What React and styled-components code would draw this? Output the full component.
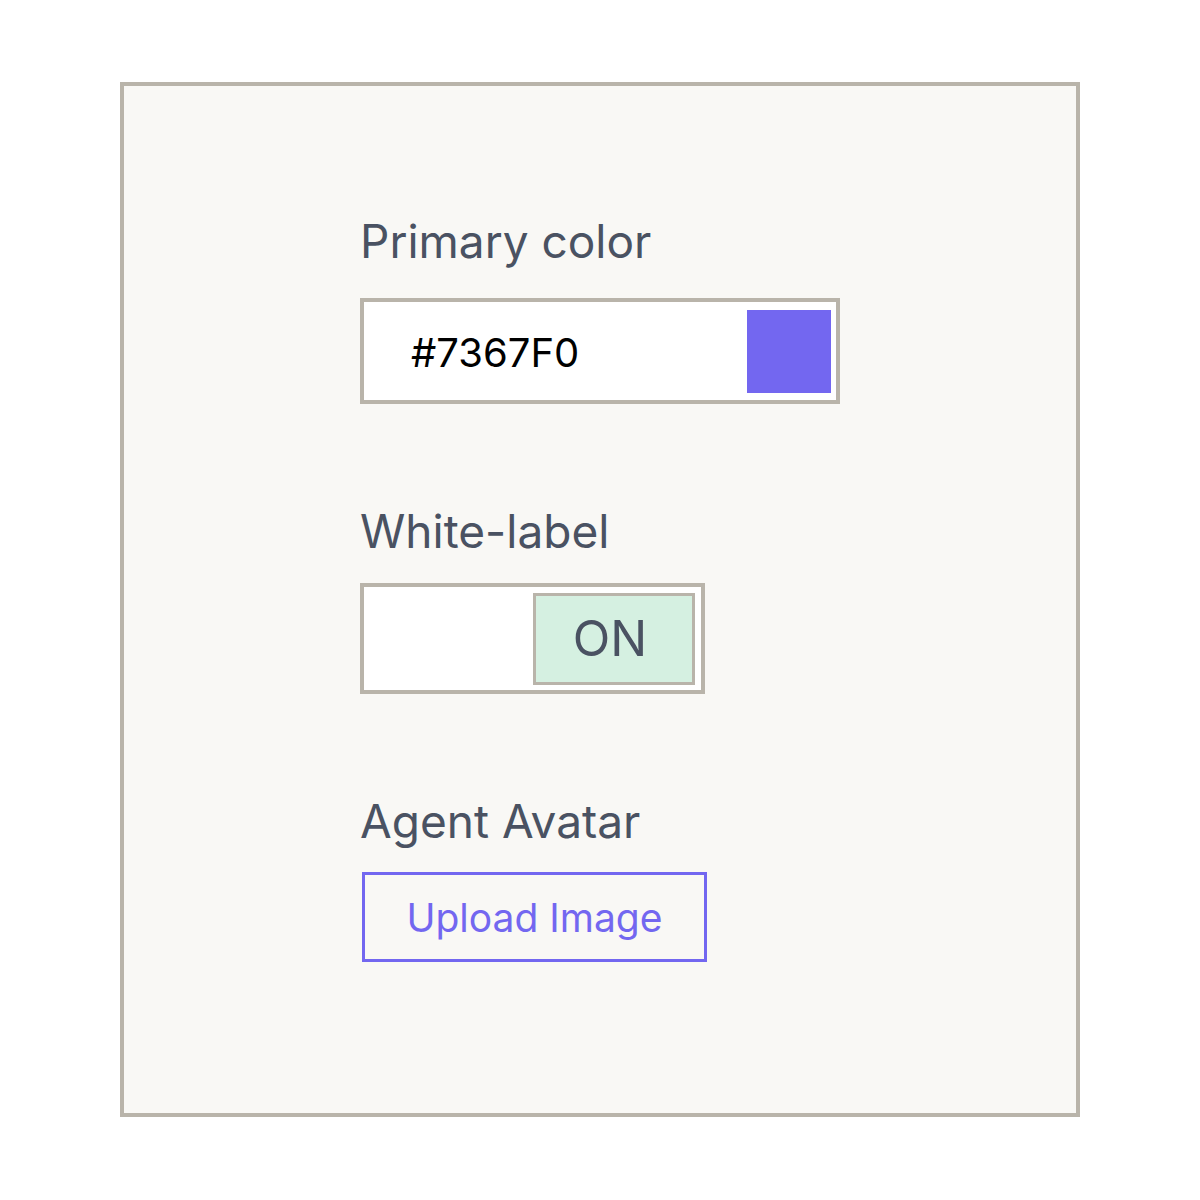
import React from "react";
import styled, { createGlobalStyle } from "styled-components";

const Global = createGlobalStyle`
  html, body { margin: 0; padding: 0; background: #ffffff; }
  body { font-family: Inter, "Noto Sans", sans-serif; }
`;

const Page = styled.div`
  width: 1200px;
  height: 1200px;
  padding: 82px 0 0 120px;
  box-sizing: border-box;
`;

const Card = styled.div`
  width: 960px;
  height: 1035px;
  box-sizing: border-box;
  border: 4px solid #b9b4aa;
  background: #f9f8f5;
  padding: 133px 0 0 236px;
  display: flex;
  flex-direction: column;
  gap: 105px;
`;

const Field = styled.div`
  display: flex;
  flex-direction: column;
  align-items: flex-start;
  gap: ${(p) => p.$gap}px;
`;

const Label = styled.div`
  font-family: Inter, sans-serif;
  font-size: 46px;
  line-height: 44px;
  color: #4a5262;
`;

const ColorInput = styled.div`
  width: 480px;
  height: 106px;
  box-sizing: border-box;
  border: 4px solid #b9b4aa;
  background: #ffffff;
  display: flex;
  align-items: center;
  justify-content: space-between;
  padding: 0 5px 0 47px;
`;

const HexText = styled.span`
  font-family: Inter, sans-serif;
  font-size: 40px;
  color: #000000;
  padding-top: 2px;
`;

const Swatch = styled.div`
  width: 84px;
  height: 83px;
  background: ${(p) => p.$color};
`;

const Toggle = styled.div`
  width: 345px;
  height: 111px;
  box-sizing: border-box;
  border: 4px solid #b9b4aa;
  background: #ffffff;
  display: flex;
  align-items: center;
  justify-content: flex-end;
  padding: 0 6px;
`;

const Knob = styled.div`
  width: 162px;
  height: 92px;
  box-sizing: border-box;
  border: 3px solid #b9b4aa;
  background: #d5f0e1;
  display: flex;
  align-items: center;
  justify-content: center;
  padding-right: 8px;
  font-family: Inter, sans-serif;
  font-size: 49px;
  color: #4a5262;
`;

const UploadButton = styled.button`
  width: 345px;
  height: 90px;
  box-sizing: border-box;
  margin-left: 2px;
  border: 3px solid #7367f0;
  background: transparent;
  color: #7367f0;
  font-family: Inter, sans-serif;
  font-size: 39px;
  padding: 0;
  display: flex;
  align-items: center;
  justify-content: center;
  cursor: pointer;
`;

export default function App() {
  return (
    <>
      <Global />
      <Page>
        <Card>
          <Field $gap={35}>
            <Label>Primary color</Label>
            <ColorInput>
              <HexText>#7367F0</HexText>
              <Swatch $color="#7367f0" />
            </ColorInput>
          </Field>
          <Field $gap={30}>
            <Label>White-label</Label>
            <Toggle>
              <Knob>ON</Knob>
            </Toggle>
          </Field>
          <Field $gap={29}>
            <Label>Agent Avatar</Label>
            <UploadButton>Upload Image</UploadButton>
          </Field>
        </Card>
      </Page>
    </>
  );
}
